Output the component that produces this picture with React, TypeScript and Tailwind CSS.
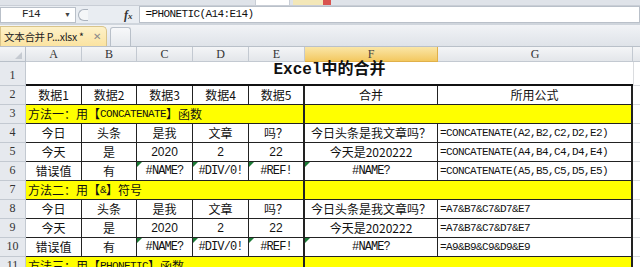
import React from 'react';

type Cell = { t: string; k?: 'cjk' | 'num' | 'mono' | 'f'; err?: boolean };

const W = [56, 55, 56, 56, 56, 133, 195];
const LETTERS = ['A', 'B', 'C', 'D', 'E', 'F', 'G'];

const cjk = { fontFamily: '"Noto Sans CJK SC", sans-serif' };
const mono = { fontFamily: '"Liberation Mono", "Noto Sans CJK SC", monospace' };

const RowHead = ({ n, h = 'h-[19px]' }: { n: number; h?: string }) => (
  <div className={`${h} w-[26px] shrink-0 flex items-end justify-center pb-[1px] bg-[#e6e9ee] border-r border-b border-[#c3c9d1] text-[12px] text-[#333]`} style={{ fontFamily: '"Liberation Serif", serif' }}>
    {n}
  </div>
);

const Tail = () => <div className="flex-1 border-b border-[#dadcdf]" />;

const DataRow = ({ n, cells }: { n: number; cells: Cell[] }) => (
  <div className="flex h-[19px]">
    <RowHead n={n} />
    {cells.map((c, i) => {
      const thick = i === 4 || i === 6;
      const left = c.k === 'f';
      return (
        <div
          key={i}
          className={`relative shrink-0 flex items-center border-b border-[#222] ${thick ? 'border-r-2' : 'border-r'} ${left ? 'justify-start pl-[2px]' : 'justify-center'}`}
          style={{ width: W[i] }}
        >
          {c.err && <div className="absolute top-0 left-0 w-0 h-0 border-t-[5px] border-t-[#1c7a36] border-r-[5px] border-r-transparent" />}
          {c.k === 'mono' || c.k === 'f' ? (
            <span className={`${c.k === 'mono' ? 'text-[12px] tracking-[-0.9px]' : 'text-[11px] tracking-[-0.6px]'} text-[#111] whitespace-nowrap`} style={mono}>{c.t}</span>
          ) : c.k === 'num' ? (
            <span className="text-[12px] text-[#111]" style={{ fontFamily: '"Liberation Sans", sans-serif' }}>{c.t}</span>
          ) : (
            <span className="text-[12px] text-[#111] whitespace-nowrap" style={cjk}>{c.t}</span>
          )}
        </div>
      );
    })}
    <Tail />
  </div>
);

const YellowRow = ({ n, pre, code, post }: { n: number; pre: string; code: string; post: string }) => (
  <div className="flex h-[19px]">
    <RowHead n={n} />
    <div className="w-[279px] shrink-0 flex items-center pl-[2px] bg-[#ffff00] border-r-2 border-b border-[#222] text-[12px] text-[#111] whitespace-nowrap" style={cjk}>
      {pre}【<span className="text-[11px] tracking-[-0.6px]" style={mono}>{code}</span>】{post}
    </div>
    <div className="w-[328px] shrink-0 bg-[#ffff00] border-r-2 border-b border-[#222]" />
    <Tail />
  </div>
);

const base: Cell[] = [
  { t: '今日' }, { t: '头条' }, { t: '是我' }, { t: '文章' }, { t: '吗？' },
];
const row2: Cell[] = [
  { t: '今天' }, { t: '是' }, { t: '2020', k: 'num' }, { t: '2', k: 'num' }, { t: '22', k: 'num' },
];
const errs: Cell[] = [
  { t: '错误值' }, { t: '有' }, { t: '#NAME?', k: 'mono', err: true }, { t: '#DIV/0!', k: 'mono', err: true }, { t: '#REF!', k: 'mono', err: true },
];

export default function App() {
  return (
    <div className="w-[640px] h-[267px] overflow-hidden bg-white select-none">
      {/* ribbon remnant */}
      <div className="h-[6px] flex bg-[#dfe3e9] border-b border-[#c9ced6]">
        <div className="w-[255px]" />
        <div className="w-[35px] bg-white border-x border-[#c9ced6]" />
        <div className="w-[30px] ml-[3px] bg-[#f3e7b8]" />
        <div className="w-[8px] bg-[#d9534f]" />
      </div>

      {/* formula bar */}
      <div className="h-[17px] flex items-center bg-[#e9edf2]">
        <div className="w-[76px] h-[16px] bg-white border border-[#b9c0c9] flex items-center pl-[21px] relative">
          <span className="text-[11px] tracking-[-0.6px] text-[#222]" style={mono}>F14</span>
          <span className="absolute right-[4px] top-[2px] text-[7px] text-[#444]">▼</span>
        </div>
        <div className="w-[10px] h-[12px] ml-[2px] rounded-l-full border border-r-0 border-[#aab2bd] bg-[#f4f6f8]" />
        <div className="w-[36px]" />
        <span className="text-[12px] italic font-bold text-[#333]" style={{ fontFamily: '"Liberation Serif", serif' }}>f<span className="text-[9px]">x</span></span>
        <div className="flex-1 h-[17px] ml-[6px] bg-white border border-[#b9c0c9] flex items-center pl-[6px]">
          <span className="text-[11px] tracking-[-0.6px] text-[#111]" style={mono}>=PHONETIC(A14:E14)</span>
        </div>
      </div>
      <div className="h-[2px] bg-[#cfd5dc]" />

      {/* workbook tabs */}
      <div className="h-[22px] flex items-end bg-gradient-to-b from-[#f1f3f6] to-[#dfe3e9] border-b border-[#b9c0c9]">
        <div className="w-[107px] h-[20px] flex items-center pl-[3px] bg-gradient-to-b from-[#fdf1c8] to-[#fbe3a1] border border-b-0 border-[#d9c48a] rounded-tr-[5px]">
          <span className="text-[10.5px] tracking-[-0.3px] text-[#222] whitespace-nowrap" style={cjk}>文本合并 P...xlsx *</span>
          <span className="ml-auto mr-[5px] text-[10px] text-[#8a8a8a]">✕</span>
        </div>
        <div className="w-[21px] h-[19px] ml-[3px] bg-gradient-to-b from-[#f7f8fa] to-[#e6e9ed] border border-b-0 border-[#b9c0c9] rounded-t-[3px]" />
      </div>

      {/* column headers */}
      <div className="flex h-[15px]">
        <div className="w-[26px] shrink-0 relative bg-gradient-to-b from-[#f4f5f7] to-[#e3e6ea] border-r border-b border-[#b9c0c9]">
          <div className="absolute right-[3px] bottom-[2px] w-0 h-0 border-b-[7px] border-b-[#c5cad1] border-l-[7px] border-l-transparent" />
        </div>
        {LETTERS.map((l, i) => (
          <div
            key={l}
            className={`shrink-0 flex items-center justify-center border-r border-b text-[12px] ${l === 'F' ? 'bg-gradient-to-b from-[#fae6a6] to-[#f3c85e] border-[#e0b04a] text-[#444]' : 'bg-gradient-to-b from-[#f4f5f7] to-[#e3e6ea] border-[#c3c9d1] text-[#333]'}`}
            style={{ width: W[i], fontFamily: '"Liberation Serif", serif' }}
          >
            {l}
          </div>
        ))}
        <div className="flex-1 bg-gradient-to-b from-[#f4f5f7] to-[#e3e6ea] border-b border-[#c3c9d1]" />
      </div>

      {/* row 1 title */}
      <div className="flex h-[24px]">
        <RowHead n={1} h="h-[24px]" />
        <div className="w-[607px] shrink-0 flex items-end justify-center pb-[2px] border-b-2 border-[#111]">
          <span className="text-[16px] font-semibold text-[#111]" style={mono}>Excel中的合并</span>
        </div>
        <div className="flex-1 border-l border-b border-[#dadcdf]" />
      </div>

      <DataRow
        n={2}
        cells={[
          { t: '数据1' }, { t: '数据2' }, { t: '数据3' }, { t: '数据4' }, { t: '数据5' },
          { t: '合并' }, { t: '所用公式' },
        ]}
      />
      <YellowRow n={3} pre="方法一：用" code="CONCATENATE" post="函数" />
      <DataRow n={4} cells={[...base, { t: '今日头条是我文章吗？' }, { t: '=CONCATENATE(A2,B2,C2,D2,E2)', k: 'f' }]} />
      <DataRow n={5} cells={[...row2, { t: '今天是2020222' }, { t: '=CONCATENATE(A4,B4,C4,D4,E4)', k: 'f' }]} />
      <DataRow n={6} cells={[...errs, { t: '#NAME?', k: 'mono', err: true }, { t: '=CONCATENATE(A5,B5,C5,D5,E5)', k: 'f' }]} />
      <YellowRow n={7} pre="方法二：用" code="&" post="符号" />
      <DataRow n={8} cells={[...base, { t: '今日头条是我文章吗？' }, { t: '=A7&B7&C7&D7&E7', k: 'f' }]} />
      <DataRow n={9} cells={[...row2, { t: '今天是2020222' }, { t: '=A7&B7&C7&D7&E7', k: 'f' }]} />
      <DataRow n={10} cells={[...errs, { t: '#NAME?', k: 'mono', err: true }, { t: '=A9&B9&C9&D9&E9', k: 'f' }]} />
      <YellowRow n={11} pre="方法三：用" code="PHONETIC" post="函数" />
    </div>
  );
}
